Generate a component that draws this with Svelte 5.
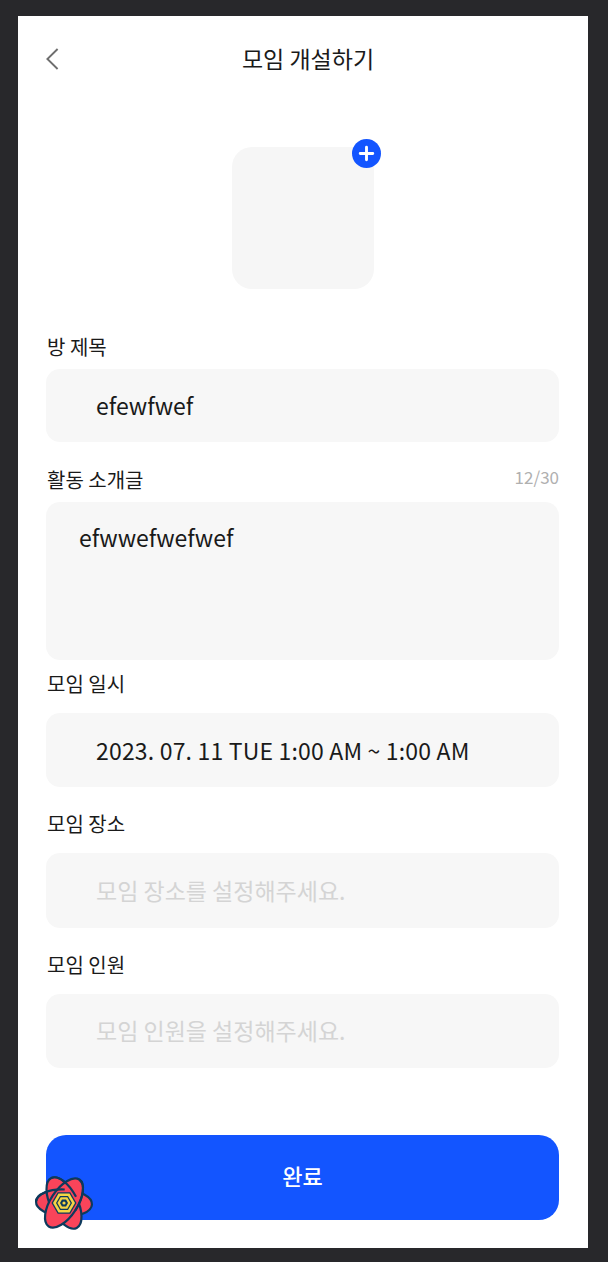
<script>
  const fields = [
    { label: '모임 일시', value: '2023. 07. 11 TUE 1:00 AM ~ 1:00 AM', cls: 'date' },
    { label: '모임 장소', value: '모임 장소를 설정해주세요.', cls: 'place', muted: true },
    { label: '모임 인원', value: '모임 인원을 설정해주세요.', cls: 'people', muted: true }
  ];
  const hex = (r) =>
    [0, 60, 120, 180, 240, 300]
      .map((a) => {
        const t = (a * Math.PI) / 180;
        return `${(r * Math.cos(t)).toFixed(2)},${(r * Math.sin(t)).toFixed(2)}`;
      })
      .join(' ');
</script>

<div class="frame">
  <main class="phone">
    <header class="header">
      <button class="back" aria-label="뒤로">
        <svg width="13" height="22" viewBox="0 0 13 22"><path d="M11.6 1 L1.4 11 L11.6 21" fill="none" stroke="#6e6e6e" stroke-width="1.9"/></svg>
      </button>
      <h1>모임 개설하기</h1>
    </header>

    <div class="photo-wrap">
      <div class="photo">
        <span class="add">
          <svg width="29" height="29" viewBox="0 0 30 30"><path d="M15 8.5v13M8.5 15h13" stroke="#fff" stroke-width="3" stroke-linecap="round"/></svg>
        </span>
      </div>
    </div>

    <section class="form">
      <div class="label">방 제목</div>
      <div class="input title">efewfwef</div>

      <div class="label-row">
        <div class="label">활동 소개글</div>
        <span class="count">12/30</span>
      </div>
      <div class="textarea">efwwefwefwef</div>

      {#each fields as f}
        <div class="label {f.cls}-label">{f.label}</div>
        <div class="input {f.cls}" class:muted={f.muted}>{f.value}</div>
      {/each}

      <button class="submit">완료</button>
    </section>
  </main>

  <svg class="logo" width="60" height="60" viewBox="-30 -30 60 60" aria-hidden="true">
    {#each [0, 60, 120] as r}
      <ellipse cx="0" cy="0" rx="28" ry="13.5" transform="rotate({r + 3})" fill="#f9445a" stroke="#0d3a5c" stroke-width="2.2"/>
    {/each}
    {#each [0, 60, 120] as r}
      <path d="M-28 0 A28 13.5 0 0 1 0 -13.5" transform="rotate({r + 3})" fill="none" stroke="#0d3a5c" stroke-width="2.2"/>
    {/each}
    <polygon points={hex(12.5)} fill="#0d3a5c"/>
    <polygon points={hex(11)} fill="#f5d544"/>
    <polygon points={hex(8)} fill="#0d3a5c"/>
    <polygon points={hex(6.6)} fill="#f5d544"/>
    <polygon points={hex(4)} fill="#0d3a5c"/>
    <circle r="1.6" fill="#f5d544"/>
  </svg>
</div>

<style>
  :global(body) { margin: 0; background: #28282b; }
  .frame {
    position: relative;
    box-sizing: border-box;
    width: 608px;
    height: 1262px;
    padding: 16px 20px 14px 18px;
    background: #28282b;
    font-family: "Noto Sans CJK KR", "Noto Sans", sans-serif;
    color: #1a1a1a;
  }
  .phone { height: 100%; background: #fff; padding: 0 29px 0 28px; box-sizing: border-box; }
  .header { position: relative; height: 86px; display: flex; justify-content: center; padding-top: 26px; box-sizing: border-box; }
  .header h1 { margin: 0; font-size: 23px; font-weight: 400; line-height: 32px; padding-left: 11px; }
  .back { position: absolute; left: 0; top: 32px; padding: 0; border: 0; background: none; line-height: 0; }
  .photo-wrap { display: flex; justify-content: center; padding-top: 45px; }
  .photo { position: relative; width: 142px; height: 142px; border-radius: 20px; background: #f6f6f6; margin-left: 1px; }
  .add { position: absolute; right: -7px; top: -8px; width: 29px; height: 29px; border-radius: 50%; background: #1355ff; line-height: 0; }
  .form { display: flex; flex-direction: column; padding-top: 44px; }
  .label { font-size: 20px; line-height: 28px; height: 28px; color: #1a1a1a; padding-left: 1px; }
  .label-row { display: flex; justify-content: space-between; align-items: flex-end; margin-top: 24px; height: 36px; }
  .label-row .label { height: 26px; line-height: 26px; margin-bottom: 9px; }
  .count { font-size: 17px; line-height: 22px; color: #b0b0b0; margin-bottom: 14px; }
  .input {
    box-sizing: border-box;
    height: 74px;
    background: #f7f7f7;
    border-radius: 14px;
    padding-left: 50px;
    padding-bottom: 1px;
    font-size: 23px;
    display: flex;
    align-items: center;
    color: #1a1a1a;
  }
  .input.title { margin-top: 8px; height: 73px; padding-bottom: 2px; }
  .input.date { margin-top: 15px; letter-spacing: 0.18px; padding-bottom: 0; }
  .input.place { margin-top: 15px; height: 75px; padding-bottom: 2px; }
  .input.people { margin-top: 15px; padding-bottom: 2px; }
  .input.muted { color: #d4d4d4; }
  .place-label { margin-top: 23px; }
  .people-label { margin-top: 23px; }
  .date-label { margin-top: 10px; }
  .textarea {
    box-sizing: border-box;
    height: 158px;
    background: #f7f7f7;
    border-radius: 14px;
    padding: 19px 33px;
    font-size: 23px;
    line-height: 33px;
  }
  .submit {
    margin-top: 67px;
    height: 85px;
    border: 0;
    border-radius: 20px;
    padding: 0 0 5px;
    background: #1355ff;
    color: #fff;
    font: 500 22px "Noto Sans CJK KR", sans-serif;
  }
  .logo { position: absolute; left: 34px; top: 1173px; }
</style>
